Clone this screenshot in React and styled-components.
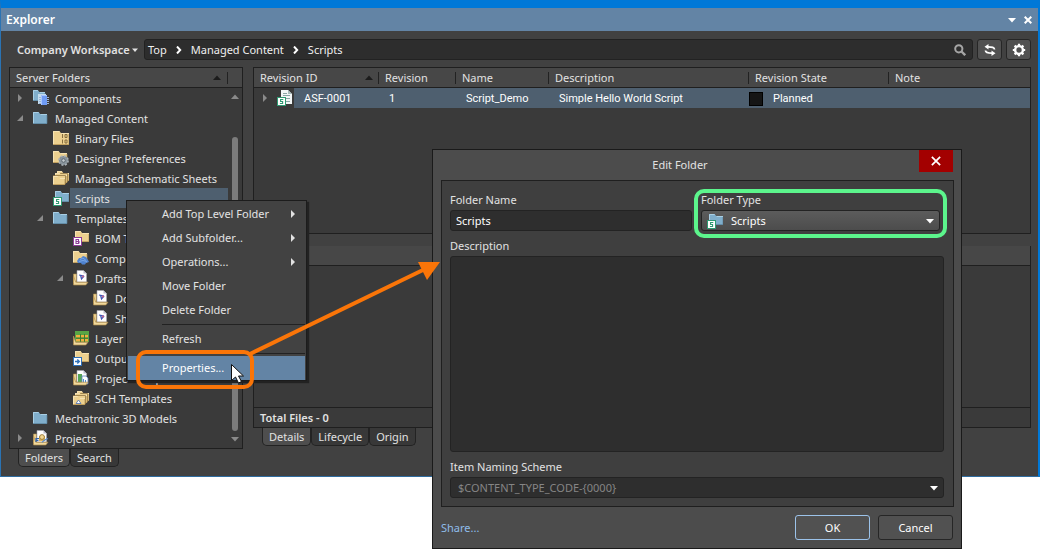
import React, {useState} from 'react';
import styled, {createGlobalStyle, css} from 'styled-components';

const GlobalStyle = createGlobalStyle`
  * {
    box-sizing: border-box;
  }

  body {
    margin: 0;
    background: #ffffff;
    color: #e2e2e2;
    font: 11px/20px "Noto Sans", "Open Sans", sans-serif;
  }

  button, input, select, textarea {
    margin: 0;
    color: inherit;
    font: inherit;
  }
`
const Desktop = styled.div`
  position: relative;
  min-height: 100vh;
  overflow: hidden;
`

/* explorer window */
const Window = styled.section`
  display: flex;
  flex-direction: column;
  background: #414141;
  border: solid #0078d7;
  border-width: 8px 2px 1px 1px;
  border-left-color: #2a73b3;
  border-bottom-color: #2f6c9f;
`
const TitleBar = styled.header`
  display: flex;
  align-items: center;
  height: 23px;
  padding: 0 2px 0 5px;
  background: #6384a5;
`
const WindowTitle = styled.h1`
  flex: 1;
  margin: 0;
  color: #ffffff;
  font-size: 12px;
  font-weight: 600;
`
const IconButton = styled.button`
  display: flex;
  align-items: center;
  justify-content: center;
  width: 16px;
  height: 16px;
  padding: 0;
  color: #ffffff;
  background: none;
  border: 0;
`
const Toolbar = styled.div`
  display: flex;
  gap: 4px;
  height: 36px;
  padding: 8px 7px 7px 16px;
`
const Workspace = styled.button`
  display: flex;
  align-items: center;
  gap: 2px;
  width: 123px;
  padding: 0;
  font-weight: 600;
  white-space: nowrap;
  background: none;
  border: 0;
`
const Address = styled.nav`
  display: flex;
  flex: 1;
  align-items: center;
  gap: 9px;
  padding: 0 6px 0 3px;
  color: #f0f0f0;
  background: #2d2d2d;
  border: 1px solid #222222;
  border-radius: 3px;
`
const Crumb = styled.a`
  color: inherit;
  text-decoration: none;
`
const Spacer = styled.span`
  flex: 1;
`
const ToolButton = styled(IconButton)`
  width: 25px;
  height: 21px;
  background: #515151;
  border: 1px solid #262626;
  border-radius: 3px;
`
const Columns = styled.div`
  display: flex;
  gap: 10px;
  padding: 0 7px 9px 8px;
`
const Side = styled.div`
  flex: 0 0 234px;
  min-width: 0;
`
const Main = styled.div`
  flex: 1;
  min-width: 0;
`
const Panel = styled.div`
  background: #3a3a3a;
  border: 1px solid #1f1f1f;
`
const PanelHeader = styled.div`
  display: flex;
  align-items: center;
  gap: 6px;
  height: 20px;
  padding: 0 14px 0 6px;
  background: #474747;
  border-bottom: 1px solid #1f1f1f;
`
const Divider = styled.span`
  width: 1px;
  height: 12px;
  background: #222222;
`
const Scroller = styled.div`
  display: flex;
`
const Tree = styled.ul`
  flex: 1;
  min-width: 0;
  margin: 0;
  padding: 0;
  list-style: none;
`
const TreeRow = styled.li`
  display: flex;
  align-items: center;
  height: 20px;
  padding-left: ${({$level}) => 6 + $level * 20}px;
`
const Twisty = styled.span`
  display: flex;
  width: 17px;
`
const TreeLabel = styled.span`
  flex: 1;
  min-width: 0;
  margin-left: 1px;
  padding: 2px 0 0 5px;
  overflow: hidden;
  line-height: 18px;
  white-space: nowrap;
  background: ${({$selected}) => $selected ? '#4e5f6f' : 'none'};
`
const ScrollBar = styled.div`
  display: flex;
  flex-direction: column;
  align-items: center;
  width: 14px;
  padding: 5px 0;
`
const Thumb = styled.div`
  flex: 1;
  width: 6px;
  margin: 36px 0 4px;
  background: #7c7c7c;
  border-radius: 3px;
`
const Tabs = styled.div`
  display: flex;
  padding-left: 9px;
`
const Tab = styled.button`
  height: 18px;
  padding: 0 6px;
  line-height: 16px;
  background: ${({$active}) => $active ? '#4e4e4e' : '#383838'};
  border: 1px solid #232323;
  border-top: 0;
  border-radius: 0 0 5px 5px;
`
const Table = styled.table`
  width: 100%;
  table-layout: fixed;
  border-spacing: 0;
`
const Th = styled.th`
  width: ${({$width}) => $width ? `${$width}px` : 'auto'};
  height: 20px;
  padding: 0;
  font-weight: 400;
  line-height: 19px;
  text-align: left;
  background: #474747;
  border-bottom: 1px solid #1f1f1f;
`
const ThInner = styled.div`
  display: flex;
  align-items: center;
  gap: 5px;
  padding-left: 6px;
`
const Td = styled.td`
  height: 20px;
  padding: ${({$plain}) => $plain ? 0 : 2}px 0 0 ${({$indent = 10}) => $indent}px;
  color: #ffffff;
  font-family: Roboto, "Liberation Sans", sans-serif;
  line-height: 18px;
  white-space: nowrap;
  background: ${({$plain}) => $plain ? 'none' : '#4e5f6f'};
`
const FileCell = styled.div`
  display: flex;
  align-items: center;
  gap: 8px;
`
const FileName = styled.div`
  display: flex;
  flex: 1;
  align-items: center;
  gap: 1px;
`
const FileLabel = styled.span`
  flex: 1;
  padding: 2px 0 0 10px;
  background: #4e5f6f;
`
const State = styled.div`
  display: flex;
  align-items: center;
  gap: 10px;
`
const Swatch = styled.span`
  width: 14px;
  height: 14px;
  background: #151515;
  border: 1px solid #000000;
`
const Revisions = styled(Panel)`
  min-height: 167px;
`
const Details = styled(Panel)`
  margin-top: 12px;
  border-top: 0;
`
const DetailsBody = styled.div`
  height: 142px;
  border-bottom: 1px solid #1f1f1f;
`
const Total = styled.div`
  padding-left: 6px;
  font-weight: 600;
  line-height: 19px;
`

/* context menu */
const Menu = styled.div`
  position: absolute;
  top: 200px;
  left: 126px;
  display: flex;
  flex-direction: column;
  width: 181px;
  padding-top: 1px;
  background: #424242;
  border: 1px solid #1c1c1c;
  box-shadow: 2px 2px 1px #222222;
`
const MenuItem = styled.button`
  display: flex;
  align-items: center;
  justify-content: space-between;
  height: 24px;
  margin: 0 1px;
  padding: 0 8px 0 34px;
  color: ${({$active}) => $active ? '#ffffff' : 'inherit'};
  background: ${({$active}) => $active ? '#6384a5' : 'none'};
  border: 0;
`
const Separator = styled.hr`
  width: 143px;
  height: 1px;
  margin: 2px 0 2px 35px;
  background: #222222;
  border: 0;
`

/* dialog */
const Dialog = styled.form`
  position: absolute;
  top: 149px;
  left: 432px;
  width: 530px;
  background: #4c4c4c;
  border: 1px solid #1a1a1a;
`
const DialogBar = styled.div`
  display: flex;
  align-items: flex-start;
  height: 30px;
  padding: 0 8px;
`
const DialogTitle = styled.h2`
  flex: 1;
  margin: 0;
  font-size: 11px;
  font-weight: 400;
  line-height: 30px;
  text-align: center;
`
const CloseButton = styled(IconButton)`
  width: 34px;
  height: 22px;
  background: #a30000;
`
const DialogBody = styled.div`
  display: flex;
  flex-direction: column;
  gap: 5px;
  margin: 0 7px 0 8px;
  padding: 9px 9px 8px 8px;
  background: #3f3f3f;
  border: 1px solid #1f1f1f;
`
const FieldRow = styled.div`
  display: grid;
  grid-template-columns: 242px 1fr;
  gap: 9px;
  padding-right: 4px;
`
const Field = styled.div`
  position: relative;
  display: flex;
  flex-direction: column;
`
const fieldBox = css`
  width: 100%;
  height: 21px;
  padding: 0 5px;
  background: #2e2e2e;
  border: 1px solid #232323;
  border-radius: 3px;
  outline: 0;
`
const Input = styled.input`
  ${fieldBox}
  color: #ffffff;
`
const TextArea = styled.textarea`
  ${fieldBox}
  height: 196px;
  resize: none;
`
const SelectWrap = styled.div`
  position: relative;
  display: flex;
`
const Select = styled.select`
  ${fieldBox}
  appearance: none;
  padding-left: ${({$icon}) => $icon ? 29 : 7}px;
  color: ${({$icon}) => $icon ? '#ffffff' : '#858585'};
  background: ${({$icon}) => $icon ? 'linear-gradient(#5c5c5c, #4c4c4c)' : '#2e2e2e'};
`
const SelectIcon = styled.span`
  position: absolute;
  top: 3px;
  left: 6px;
  display: flex;
  pointer-events: none;
`
const SelectArrow = styled.span`
  position: absolute;
  top: 7px;
  right: 6px;
  display: flex;
  color: #ffffff;
  pointer-events: none;
`
const DialogFooter = styled.div`
  display: flex;
  align-items: center;
  gap: 8px;
  padding: 8px;
`
const ShareLink = styled.a`
  flex: 1;
  color: #8fbdea;
  text-decoration: none;
`
const DialogButton = styled.button`
  width: 75px;
  height: 25px;
  padding: 0;
  color: #ffffff;
  background: #515151;
  border: 1px solid ${({$primary}) => $primary ? '#9cc3ea' : '#262626'};
  border-radius: 3px;
`

/* callouts over the windows */
const Callout = styled.div`
  position: absolute;
  top: ${({$top}) => $top}px;
  left: ${({$left}) => $left}px;
  width: ${({$width}) => $width}px;
  height: ${({$height}) => $height}px;
  border: 4px solid ${({$color}) => $color};
  border-radius: 10px;
  pointer-events: none;
`
const Overlay = styled.svg`
  position: absolute;
  top: 0;
  left: 0;
  pointer-events: none;
`

const Triangle = ({dir = "down", size = 8, color = "currentColor"}) => {
    const paths = {
        down: "M0 2h8L4 6.500z",
        up: "M0 6h8L4 1.500z",
        right: "M2 0v8l4-4z",
        corner: "M7 1v6H1z",
    };
    return (
        <svg width={size} height={size} viewBox="0 0 8 8">
            <path d={paths[dir]} fill={color}/>
        </svg>
    )
};

const Cross = ({size = 8, width = 2}) => (
    <svg width={size} height={size} viewBox="0 0 8 8">
        <path d="M0.7 0.7l6.6 6.6M7.3 0.7l-6.6 6.6" stroke="currentColor" strokeWidth={width}/>
    </svg>
);

const Chevron = () => (
    <svg width="6" height="8" viewBox="0 0 6 8">
        <path d="M1 0.5L4.2 4 1 7.5" fill="none" stroke="#ffffff" strokeWidth="2"/>
    </svg>
);

const yellow = ["#ecd08f", "#f6e3b4", "#b08d4c"];
const blue = ["#80aecb", "#a9cfe4", "#587f99"];

const Folder = ({colors = yellow, x = 0, y = 0, w = 14, h = 12}) => (
    <g transform={`translate(${x} ${y})`}>
        <path d={`M0 0h${w * 0.4}l1.5 2H${w}v${h - 2}H0z`} fill={colors[0]}/>
        <path d={`M0.5 ${h - 0.5}V0.5h${w * 0.4 - 0.5}`} fill="none" stroke={colors[1]}/>
        <path d={`M${w * 0.4 + 2} 2.5H${w}`} stroke={colors[1]}/>
        <path d={`M0 ${h - 0.5}h${w}V3`} fill="none" stroke={colors[2]} strokeWidth="0.7"/>
    </g>
);

const Badge = ({color, letter}) => (
    <g>
        <rect x="0.5" y="7.5" width="8" height="8" fill="#ffffff" stroke={color}/>
        {letter === "S" && <path d="M6.3 9.5H3.6v2h2v2H2.9" fill="none" stroke={color} strokeWidth="1.1"/>}
        {letter === "B" && <path d="M3 9.5h2.5v4H3zM3 11.5h3v2" fill="none" stroke={color} strokeWidth="1.1"/>}
        {letter === "arrow" && <path d="M2 11.5h4M4.3 9.5l2 2-2 2" fill="none" stroke={color} strokeWidth="1.4"/>}
    </g>
);

const Sheets = () => (
    <g>
        <Folder x={4} y={1} w={12} h={10}/>
        <path d="M2 3.5h12.5V12" fill="none" stroke="#8f7440" strokeWidth="0.8"/>
        <Folder x={2} y={3} w={12} h={10}/>
        <path d="M0 5.5h12.5V14" fill="none" stroke="#8f7440" strokeWidth="0.8"/>
        <Folder x={0} y={6} w={12} h={9}/>
    </g>
);

const OpenFolder = () => (
    <g>
        <path d="M0.5 4h3v9h-3z" fill={yellow[0]} stroke={yellow[2]} strokeWidth="0.6"/>
        <path d="M4 0.5h6.5l3 3V12H4z" fill="#ffffff" stroke="#a8a8b4" strokeWidth="0.6"/>
        <path d="M10.5 0.5v3h3z" fill="#b9bccb"/>
    </g>
);

const Tray = () => (
    <path d="M0.5 15V6l2.2 6.2H15L12.8 15z" fill="#f1d99c" stroke={yellow[2]} strokeWidth="0.7"/>
);

const icons = {
    components: (
        <g>
            <Folder colors={blue} w={12} h={11}/>
            <path d="M5 4h8v10H5z" fill="#c3dcec"/>
            <path d="M8 5h6v10H8z" fill="#6f9cf5"/>
            <path d="M8.5 15V5.5H14" fill="none" stroke="#a8c5ff"/>
            <path d="M6 7.5h2M6 9.5h2M6 11.5h2M6 13.5h2M14 7.5h2M14 9.5h2M14 11.5h2M14 13.5h2" stroke="#9cb4d8"/>
        </g>
    ),
    folder: <Folder colors={blue} y={2}/>,
    binary: (
        <g>
            <Folder w={16} y={1} h={14}/>
            <path d="M9.5 4v4M12 4.5h2v3h-2zM9.5 9.5v4M12 10h2v3h-2z" fill="none" stroke="#7b6336" strokeWidth="0.9"/>
        </g>
    ),
    preferences: (
        <g>
            <Folder y={1}/>
            <circle cx="10.5" cy="10.5" r="4.6" fill="#7f8a92" stroke="#a9b0b5" strokeWidth="1.6" strokeDasharray="2 1.6"/>
            <circle cx="10.5" cy="10.5" r="3.4" fill="#8c979f"/>
            <circle cx="10.5" cy="10.5" r="1.8" fill="#c2c9cd" stroke="#5c676f"/>
        </g>
    ),
    sheets: <Sheets/>,
    scripts: (
        <g>
            <Folder colors={blue} x={2} y={1} h={11}/>
            <Badge color="#2f9a72" letter="S"/>
        </g>
    ),
    bom: (
        <g>
            <Folder x={2} y={1} h={11}/>
            <Badge color="#8c3d96" letter="B"/>
        </g>
    ),
    comp: (
        <g>
            <Folder y={1}/>
            <path d="M4 11l2-3h2l2-2 3 1 2 3 1 2-3 1-1 1.5H9L8 13H5z" fill="#4e82cf"/>
            <path d="M7 9.5l3-1.5 3 2.5M6 11.5l4-1 4 1" fill="none" stroke="#7aa7e6"/>
        </g>
    ),
    drafts: (
        <g>
            <OpenFolder/>
            <path d="M6 5l5 1M7.5 5l1 4 2.5-3" fill="none" stroke="#3f56b5" strokeWidth="1.2"/>
            <path d="M9 5.5l2.5 0.5-2 2z" fill="#c85a84"/>
            <Tray/>
        </g>
    ),
    layers: (
        <g>
            <path d="M2 1h14v11H2z" fill="#57a545"/>
            <path d="M3 5h12v2.5H3zM3 9h12v2.5H3z" fill="#f0ae3f"/>
            <path d="M7.5 4v8M11.5 4v8M3 8.2h12" stroke="#3c7c31"/>
            <Tray/>
        </g>
    ),
    output: (
        <g>
            <Folder x={2} y={1} h={11}/>
            <Badge color="#2f70b8" letter="arrow"/>
        </g>
    ),
    project: (
        <g>
            <OpenFolder/>
            <path d="M5 4h4v8H5z" fill="#55a457"/>
            <path d="M9 6h4l2 2v6H9z" fill="#ffffff" stroke="#5b80bd" strokeWidth="0.8"/>
            <path d="M10.5 9v4M12.5 10v3" stroke="#4c8ad0"/>
            <Tray/>
        </g>
    ),
    sch: (
        <g>
            <Sheets/>
            <path d="M3 13.5L5.5 10 8 13.5z" fill="#ffffff" stroke="#4a6fb0" strokeWidth="0.8"/>
        </g>
    ),
    projects: (
        <g>
            <OpenFolder/>
            <path d="M6 6h6v5H6z" fill="#dcb356"/>
            <circle cx="9" cy="7" r="2.4" fill="#f3d894" stroke="#8f6f30" strokeWidth="0.8"/>
            <Tray/>
            <path d="M3 12V8.5h3M3 10.3h2.5" fill="none" stroke="#2e62ad" strokeWidth="1.2"/>
            <path d="M9 12.5c2-3 4-3 6-4" fill="none" stroke="#5d8cc9" strokeWidth="1.2"/>
        </g>
    ),
    file: (
        <g>
            <path d="M4 0h7l4 4v10H4z" fill="#f2f6f6"/>
            <path d="M11 0v4h4z" fill="#a9bdbd"/>
            <path d="M6 3.5h4M6 5.5h7M9 8.5h4M9 11.5h4" stroke="#8ba5a5"/>
            <Badge color="#2f9a72" letter="S"/>
        </g>
    ),
};

const Icon = ({name}) => (
    <svg width="16" height="16" viewBox="0 0 16 16">{icons[name]}</svg>
);

const folders = [
    {level: 0, icon: "components", name: "Components", twisty: "right"},
    {level: 0, icon: "folder", name: "Managed Content", twisty: "corner"},
    {level: 1, icon: "binary", name: "Binary Files"},
    {level: 1, icon: "preferences", name: "Designer Preferences"},
    {level: 1, icon: "sheets", name: "Managed Schematic Sheets"},
    {level: 1, icon: "scripts", name: "Scripts", selected: true},
    {level: 1, icon: "folder", name: "Templates", twisty: "corner"},
    {level: 2, icon: "bom", name: "BOM T"},
    {level: 2, icon: "comp", name: "Comp"},
    {level: 2, icon: "drafts", name: "Drafts", twisty: "corner"},
    {level: 3, icon: "drafts", name: "Do"},
    {level: 3, icon: "drafts", name: "Sh"},
    {level: 2, icon: "layers", name: "Layer S"},
    {level: 2, icon: "output", name: "Outpu"},
    {level: 2, icon: "project", name: "Project Templates"},
    {level: 2, icon: "sch", name: "SCH Templates"},
    {level: 0, icon: "folder", name: "Mechatronic 3D Models"},
    {level: 0, icon: "projects", name: "Projects", twisty: "right"},
];

const columns = [
    {name: "Revision ID", width: 125, sorted: true},
    {name: "Revision", width: 77},
    {name: "Name", width: 93},
    {name: "Description", width: 200},
    {name: "Revision State", width: 140},
    {name: "Note"},
];

const ContextMenu = () => (
    <Menu>
        <MenuItem>Add Top Level Folder <Triangle dir="right"/></MenuItem>
        <MenuItem>Add Subfolder... <Triangle dir="right"/></MenuItem>
        <MenuItem>Operations... <Triangle dir="right"/></MenuItem>
        <MenuItem>Move Folder</MenuItem>
        <MenuItem>Delete Folder</MenuItem>
        <Separator/>
        <MenuItem>Refresh</MenuItem>
        <Separator/>
        <MenuItem $active>Properties...</MenuItem>
    </Menu>
);

const EditFolder = () => {
    const [name, setName] = useState("Scripts");
    const [description, setDescription] = useState("");

    return (
        <Dialog onSubmit={(e) => e.preventDefault()}>
            <DialogBar>
                <DialogTitle>Edit Folder</DialogTitle>
                <CloseButton type="button" aria-label="Close"><Cross size={10} width={1.4}/></CloseButton>
            </DialogBar>
            <DialogBody>
                <FieldRow>
                    <Field>
                        <label htmlFor="folder-name">Folder Name</label>
                        <Input id="folder-name" value={name} onChange={(e) => setName(e.target.value)}/>
                    </Field>
                    <Field>
                        <label htmlFor="folder-type">Folder Type</label>
                        <SelectWrap>
                            <Select id="folder-type" $icon>
                                <option>Scripts</option>
                            </Select>
                            <SelectIcon><Icon name="scripts"/></SelectIcon>
                            <SelectArrow><Triangle/></SelectArrow>
                        </SelectWrap>
                    </Field>
                </FieldRow>
                <Field>
                    <label htmlFor="description">Description</label>
                    <TextArea
                        id="description"
                        value={description}
                        onChange={(e) => setDescription(e.target.value)}
                    />
                </Field>
                <Field>
                    <label htmlFor="scheme">Item Naming Scheme</label>
                    <SelectWrap>
                        <Select id="scheme">
                            <option>{"$CONTENT_TYPE_CODE-{0000}"}</option>
                        </Select>
                        <SelectArrow><Triangle/></SelectArrow>
                    </SelectWrap>
                </Field>
            </DialogBody>
            <DialogFooter>
                <ShareLink href="#share">Share...</ShareLink>
                <DialogButton $primary>OK</DialogButton>
                <DialogButton type="button">Cancel</DialogButton>
            </DialogFooter>
        </Dialog>
    )
};

const App = () => (
    <Desktop>
        <GlobalStyle/>
        <Window>
            <TitleBar>
                <WindowTitle>Explorer</WindowTitle>
                <IconButton aria-label="Panel menu"><Triangle/></IconButton>
                <IconButton aria-label="Close panel"><Cross/></IconButton>
            </TitleBar>
            <Toolbar>
                <Workspace>Company Workspace <Triangle size={6}/></Workspace>
                <Address>
                    <Crumb href="#top">Top</Crumb>
                    <Chevron/>
                    <Crumb href="#content">Managed Content</Crumb>
                    <Chevron/>
                    <Crumb href="#scripts">Scripts</Crumb>
                    <Spacer/>
                    <svg width="12" height="12" viewBox="0 0 12 12">
                        <circle cx="4.8" cy="4.8" r="3.6" fill="none" stroke="#a5a5a5" strokeWidth="2"/>
                        <path d="M7.5 7.5l3.7 3.7" stroke="#a5a5a5" strokeWidth="2.4"/>
                    </svg>
                </Address>
                <ToolButton aria-label="Refresh">
                    <svg width="12" height="12" viewBox="0 0 12 12">
                        <path d="M10.5 5.5C10.5 3.5 8 2.8 4 2.8M1.5 6.5C1.5 8.5 4 9.2 8 9.2" fill="none" stroke="#ffffff" strokeWidth="1.8"/>
                        <path d="M4.5 0v5.6L0.5 2.8zM7.5 6.4V12l4-2.8z" fill="#ffffff"/>
                    </svg>
                </ToolButton>
                <ToolButton aria-label="Settings">
                    <svg width="14" height="14" viewBox="0 0 14 14">
                        <circle cx="7" cy="7" r="3.9" fill="none" stroke="#ffffff" strokeWidth="2.4"/>
                        <path d="M7 0.8v2M7 11.2v2M0.8 7h2M11.2 7h2M2.6 2.6L4 4M10 10l1.4 1.4M11.4 2.6L10 4M4 10l-1.4 1.4" stroke="#ffffff" strokeWidth="2.2"/>
                    </svg>
                </ToolButton>
            </Toolbar>
            <Columns>
                <Side>
                    <Panel>
                        <PanelHeader>
                            Server Folders
                            <Spacer/>
                            <Triangle dir="up" color="#1c1c1c"/>
                            <Divider/>
                        </PanelHeader>
                        <Scroller>
                            <Tree>
                                {folders.map((item, i) => (
                                    <TreeRow key={i} $level={item.level}>
                                        <Twisty>
                                            {item.twisty && <Triangle dir={item.twisty} color="#8a8a8a"/>}
                                        </Twisty>
                                        <Icon name={item.icon}/>
                                        <TreeLabel $selected={item.selected}>{item.name}</TreeLabel>
                                    </TreeRow>
                                ))}
                            </Tree>
                            <ScrollBar>
                                <Triangle dir="up" color="#8a8a8a"/>
                                <Thumb/>
                                <Triangle color="#8a8a8a"/>
                            </ScrollBar>
                        </Scroller>
                    </Panel>
                    <Tabs>
                        <Tab $active>Folders</Tab>
                        <Tab>Search</Tab>
                    </Tabs>
                </Side>
                <Main>
                    <Revisions>
                        <Table>
                            <thead>
                                <tr>
                                    {columns.map(({name, width, sorted}, i) => (
                                        <Th key={name} $width={width}>
                                            <ThInner>
                                                {name}
                                                <Spacer/>
                                                {sorted && <Triangle dir="up" color="#1c1c1c"/>}
                                                {i < columns.length - 1 && <Divider/>}
                                            </ThInner>
                                        </Th>
                                    ))}
                                </tr>
                            </thead>
                            <tbody>
                                <tr>
                                    <Td $plain $indent={7}>
                                        <FileCell>
                                            <Triangle dir="right" color="#8a8a8a"/>
                                            <FileName>
                                                <Icon name="file"/>
                                                <FileLabel>ASF-0001</FileLabel>
                                            </FileName>
                                        </FileCell>
                                    </Td>
                                    <Td>1</Td>
                                    <Td>Script_Demo</Td>
                                    <Td>Simple Hello World Script</Td>
                                    <Td $indent={0}>
                                        <State><Swatch/>Planned</State>
                                    </Td>
                                    <Td/>
                                </tr>
                            </tbody>
                        </Table>
                    </Revisions>
                    <Details>
                        <PanelHeader/>
                        <DetailsBody/>
                        <Total>Total Files - 0</Total>
                    </Details>
                    <Tabs>
                        <Tab $active>Details</Tab>
                        <Tab>Lifecycle</Tab>
                        <Tab>Origin</Tab>
                    </Tabs>
                </Main>
            </Columns>
        </Window>
        <ContextMenu/>
        <EditFolder/>
        <Callout $top={189} $left={694} $width={253} $height={49} $color="#5cf58c"/>
        <Callout $top={350} $left={136} $width={118} $height={39} $color="#fa7508"/>
        <Overlay width="442" height="390" viewBox="0 0 442 390">
            <path d="M250 354L425 269" stroke="#fa7508" strokeWidth="4"/>
            <path d="M440 262L418 262L427 280z" fill="#fa7508"/>
            <path d="M231.5 364.5v16l4-3.5 3 6 3-1.5-3-5.5h5z" fill="#ffffff" stroke="#111111"/>
        </Overlay>
    </Desktop>
);

export default App;
